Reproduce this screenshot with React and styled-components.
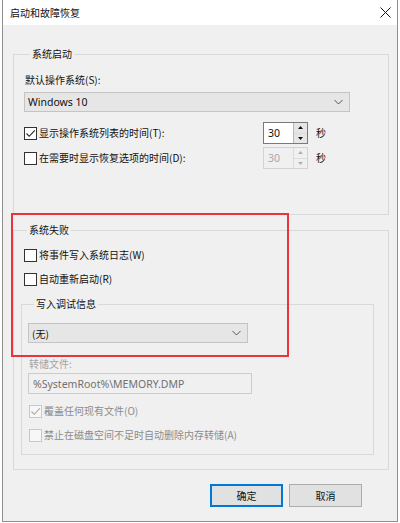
import React from "react";
import styled, { createGlobalStyle } from "styled-components";

const GlobalStyle = createGlobalStyle`
  html, body { margin: 0; padding: 0; background: #ffffff; }
  body {
    font-family: "Noto Sans CJK SC", "Noto Sans", sans-serif;
    font-size: 10px;
    color: #111;
  }
  * { box-sizing: border-box; }
`;

const Stage = styled.div`
  position: relative;
  width: 400px;
  height: 523px;
  overflow: hidden;
  padding-left: 2px;
`;

const Window = styled.div`
  width: 396px;
  height: 522px;
  border: 1px solid #8f8f8f;
  border-top: none;
  display: flex;
  flex-direction: column;
  background: #f0f0f0;
`;

const TitleBar = styled.div`
  height: 25px;
  flex-shrink: 0;
  background: #ffffff;
  display: flex;
  align-items: center;
  justify-content: space-between;
  padding: 0 6px 0 7px;
`;

const Title = styled.span`
  font-size: 10px;
  line-height: 14px;
  color: #111;
`;

const Body = styled.div`
  flex: 1;
  display: flex;
  flex-direction: column;
  padding: 22px 8px 0 10px;
`;

const Group = styled.fieldset`
  margin: ${(p) => p.$mt || 0}px 0 0 0;
  border: 1px solid #d9d9d9;
  padding: ${(p) => p.$pad};
  min-width: 0;
  width: ${(p) => (p.$w ? `${p.$w}px` : "auto")};
  display: flex;
  flex-direction: column;
  align-items: flex-start;
`;

const Legend = styled.legend`
  padding: 0 2px;
  margin-left: 6px;
  font-size: 10px;
  line-height: 14px;
  color: #111;
`;

const Label = styled.div`
  margin-top: ${(p) => p.$mt || 0}px;
  margin-left: ${(p) => p.$ml || 0}px;
  font-size: 10px;
  line-height: 14px;
  color: ${(p) => (p.$disabled ? "#a3a3a3" : "#111")};
`;

const Combo = styled.div`
  margin-top: ${(p) => p.$mt || 0}px;
  width: ${(p) => p.$w}px;
  height: 20px;
  background: #e6e6e6;
  border: 1px solid #c4c4c4;
  display: flex;
  align-items: center;
  justify-content: space-between;
  padding: 0 6px 0 3px;
  font-family: "Noto Sans", "Noto Sans CJK SC", sans-serif;
  font-size: 10.5px;
  color: #111;
`;

const Row = styled.div`
  margin-top: ${(p) => p.$mt || 0}px;
  margin-left: ${(p) => p.$ml || 0}px;
  height: ${(p) => p.$h || 14}px;
  display: flex;
  align-items: center;
`;

const CheckLabel = styled.label`
  display: flex;
  align-items: center;
  gap: 2px;
  width: ${(p) => (p.$w ? `${p.$w}px` : "auto")};
  font-size: 10px;
  line-height: 14px;
  color: ${(p) => (p.$disabled ? "#8c8c8c" : "#111")};
`;

const Box = styled.span`
  width: 13px;
  height: 13px;
  flex-shrink: 0;
  border: 1px solid ${(p) => (p.$disabled ? "#c8c8c8" : "#333")};
  background: ${(p) => (p.$disabled ? "#f7f7f7" : "#fff")};
  display: flex;
  align-items: center;
  justify-content: center;
`;

const Spin = styled.div`
  width: 45px;
  height: 22px;
  display: flex;
  border: 1px solid ${(p) => (p.$disabled ? "#d2d2d2" : "#7a7a7a")};
  background: ${(p) => (p.$disabled ? "#f0f0f0" : "#fff")};
`;

const SpinEdit = styled.div`
  flex: 1;
  display: flex;
  align-items: center;
  padding-left: 4px;
  font-family: "Noto Sans", sans-serif;
  font-size: 10.5px;
  color: ${(p) => (p.$disabled ? "#a8a8a8" : "#111")};
`;

const SpinButtons = styled.div`
  width: 14px;
  display: flex;
  flex-direction: column;
  border-left: 1px solid ${(p) => (p.$disabled ? "#dcdcdc" : "#b8b8b8")};
  background: ${(p) => (p.$disabled ? "#f0f0f0" : "#e6e6e6")};
`;

const SpinHalf = styled.div`
  flex: 1;
  display: flex;
  align-items: center;
  justify-content: center;
  & + & { border-top: 1px solid ${(p) => (p.$disabled ? "#dcdcdc" : "#b8b8b8")}; }
`;

const Unit = styled.span`
  margin-left: 8px;
  font-size: 10px;
  line-height: 14px;
  color: #111;
`;

const TextBox = styled.div`
  margin-top: ${(p) => p.$mt || 0}px;
  width: ${(p) => p.$w}px;
  height: 21px;
  border: 1px solid #cccccc;
  background: #f0f0f0;
  display: flex;
  align-items: center;
  padding-left: 4px;
  font-family: "Noto Sans", sans-serif;
  font-size: 10.5px;
  color: #707070;
`;

const ButtonRow = styled.div`
  margin-top: 14px;
  display: flex;
  justify-content: flex-end;
  gap: 6px;
  padding-right: 27px;
`;

const Button = styled.button`
  width: 73px;
  height: 23px;
  margin: 0;
  padding: 0;
  font-family: "Noto Sans CJK SC", sans-serif;
  font-size: 10px;
  color: #111;
  background: #e1e1e1;
  border: ${(p) => (p.$primary ? "2px solid #0078d7" : "1px solid #adadad")};
`;

const Annotation = styled.div`
  position: absolute;
  left: 11px;
  top: 213px;
  width: 278px;
  height: 144px;
  border: 2px solid #ea343c;
  pointer-events: none;
`;

const Check = ({ checked, disabled }) => (
  <Box $disabled={disabled}>
    {checked && (
      <svg width="11" height="11" viewBox="0 0 11 11">
        <polyline
          points="1.5,5.5 4.2,8.3 9.8,2.4"
          fill="none"
          stroke={disabled ? "#a8a8a8" : "#222"}
          strokeWidth="1.1"
        />
      </svg>
    )}
  </Box>
);

const Chevron = () => (
  <svg width="9" height="6" viewBox="0 0 9 6">
    <polyline points="0.5,1 4.5,5 8.5,1" fill="none" stroke="#555" strokeWidth="1" />
  </svg>
);

const Tri = ({ up, disabled }) => (
  <svg width="5" height="3" viewBox="0 0 5 3">
    <polygon
      points={up ? "0,3 2.5,0 5,3" : "0,0 2.5,3 5,0"}
      fill={disabled ? "#b0b0b0" : "#111"}
    />
  </svg>
);

const SpinBox = ({ value, disabled }) => (
  <Spin $disabled={disabled}>
    <SpinEdit $disabled={disabled}>{value}</SpinEdit>
    <SpinButtons $disabled={disabled}>
      <SpinHalf $disabled={disabled}>
        <Tri up disabled={disabled} />
      </SpinHalf>
      <SpinHalf $disabled={disabled}>
        <Tri disabled={disabled} />
      </SpinHalf>
    </SpinButtons>
  </Spin>
);

export default function App() {
  return (
    <Stage>
      <GlobalStyle />
      <Window>
        <TitleBar>
          <Title>启动和故障恢复</Title>
          <svg width="11" height="11" viewBox="0 0 11 11">
            <line x1="0.5" y1="0.5" x2="10.5" y2="10.5" stroke="#111" strokeWidth="1" />
            <line x1="10.5" y1="0.5" x2="0.5" y2="10.5" stroke="#111" strokeWidth="1" />
          </svg>
        </TitleBar>
        <Body>
          <Group $pad="0 10px 45px 10px">
            <Legend>系统启动</Legend>
            <Label $mt={12} $ml={1}>默认操作系统(S):</Label>
            <Combo $mt={5} $w={326}>
              <span>Windows 10</span>
              <Chevron />
            </Combo>
            <Row $mt={10} $h={22}>
              <CheckLabel $w={239}>
                <Check checked />
                <span>显示操作系统列表的时间(T):</span>
              </CheckLabel>
              <SpinBox value="30" />
              <Unit>秒</Unit>
            </Row>
            <Row $mt={3} $h={22}>
              <CheckLabel $w={239}>
                <Check />
                <span>在需要时显示恢复选项的时间(D):</span>
              </CheckLabel>
              <SpinBox value="30" disabled />
              <Unit>秒</Unit>
            </Row>
          </Group>

          <Group $mt={8} $pad="0 13px 14px 7px">
            <Legend>系统失败</Legend>
            <Row $mt={11} $ml={3}>
              <CheckLabel>
                <Check />
                <span>将事件写入系统日志(W)</span>
              </CheckLabel>
            </Row>
            <Row $mt={10} $ml={3}>
              <CheckLabel>
                <Check />
                <span>自动重新启动(R)</span>
              </CheckLabel>
            </Row>
            <Group $mt={11} $w={353} $pad="0 6px 12px 6px">
              <Legend>写入调试信息</Legend>
              <Combo $mt={12} $w={220}>
                <span style={{ fontFamily: "Noto Sans CJK SC, sans-serif", fontSize: 10 }}>(无)</span>
                <Chevron />
              </Combo>
              <Label $mt={14} $ml={1} $disabled>转储文件:</Label>
              <TextBox $mt={2} $w={224}>%SystemRoot%\MEMORY.DMP</TextBox>
              <Row $mt={10} $ml={1}>
                <CheckLabel $disabled>
                  <Check checked disabled />
                  <span>覆盖任何现有文件(O)</span>
                </CheckLabel>
              </Row>
              <Row $mt={10} $ml={1}>
                <CheckLabel $disabled>
                  <Check disabled />
                  <span>禁止在磁盘空间不足时自动删除内存转储(A)</span>
                </CheckLabel>
              </Row>
            </Group>
          </Group>

          <ButtonRow>
            <Button $primary>确定</Button>
            <Button>取消</Button>
          </ButtonRow>
        </Body>
      </Window>
      <Annotation />
    </Stage>
  );
}
